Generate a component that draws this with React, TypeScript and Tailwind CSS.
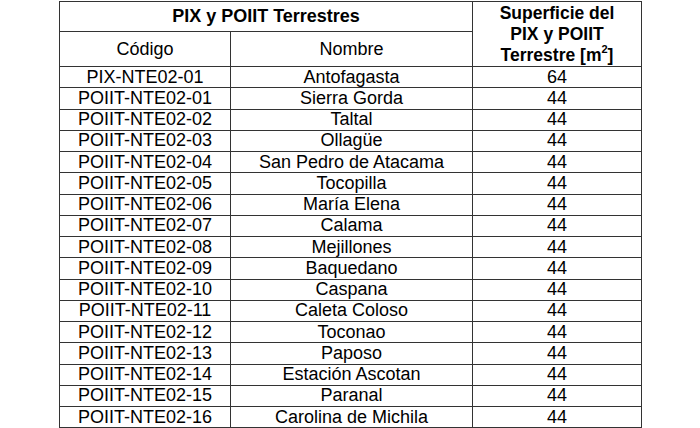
const rows: [string, string, string][] = [
  ['PIX-NTE02-01', 'Antofagasta', '64'],
  ['POIIT-NTE02-01', 'Sierra Gorda', '44'],
  ['POIIT-NTE02-02', 'Taltal', '44'],
  ['POIIT-NTE02-03', 'Ollagüe', '44'],
  ['POIIT-NTE02-04', 'San Pedro de Atacama', '44'],
  ['POIIT-NTE02-05', 'Tocopilla', '44'],
  ['POIIT-NTE02-06', 'María Elena', '44'],
  ['POIIT-NTE02-07', 'Calama', '44'],
  ['POIIT-NTE02-08', 'Mejillones', '44'],
  ['POIIT-NTE02-09', 'Baquedano', '44'],
  ['POIIT-NTE02-10', 'Caspana', '44'],
  ['POIIT-NTE02-11', 'Caleta Coloso', '44'],
  ['POIIT-NTE02-12', 'Toconao', '44'],
  ['POIIT-NTE02-13', 'Paposo', '44'],
  ['POIIT-NTE02-14', 'Estación Ascotan', '44'],
  ['POIIT-NTE02-15', 'Paranal', '44'],
  ['POIIT-NTE02-16', 'Carolina de Michila', '44'],
]

const cell = 'border border-[#333] p-0 text-center align-middle leading-[19px]'

export default function App() {
  return (
    <div className="w-[700px] h-[428px] bg-white pt-[1px] pl-[59px] font-['Liberation_Sans',Arial,sans-serif] text-[18px] text-black">
      <table className="border-collapse table-fixed w-[582px]">
        <colgroup>
          <col className="w-[171px]" />
          <col className="w-[242px]" />
          <col className="w-[169px]" />
        </colgroup>
        <thead>
          <tr className="h-[30px]">
            <th colSpan={2} className={cell + ' font-bold'}>PIX y POIIT Terrestres</th>
            <th rowSpan={2} className={cell + ' font-bold leading-[21px] pt-[1px] text-[17.5px]'}>
              Superficie del
              <br />
              PIX y POIIT
              <br />
              Terrestre [m<sup className="text-[11px] relative -top-[1px] align-super leading-none">2</sup>]
            </th>
          </tr>
          <tr className="h-[35px]">
            <th className={cell + ' font-normal'}>Código</th>
            <th className={cell + ' font-normal'}>Nombre</th>
          </tr>
        </thead>
        <tbody>
          {rows.map(([code, name, area]) => (
            <tr key={code} className="h-[21.25px]">
              <td className={cell}>{code}</td>
              <td className={cell}>{name}</td>
              <td className={cell}>{area}</td>
            </tr>
          ))}
        </tbody>
      </table>
    </div>
  )
}
